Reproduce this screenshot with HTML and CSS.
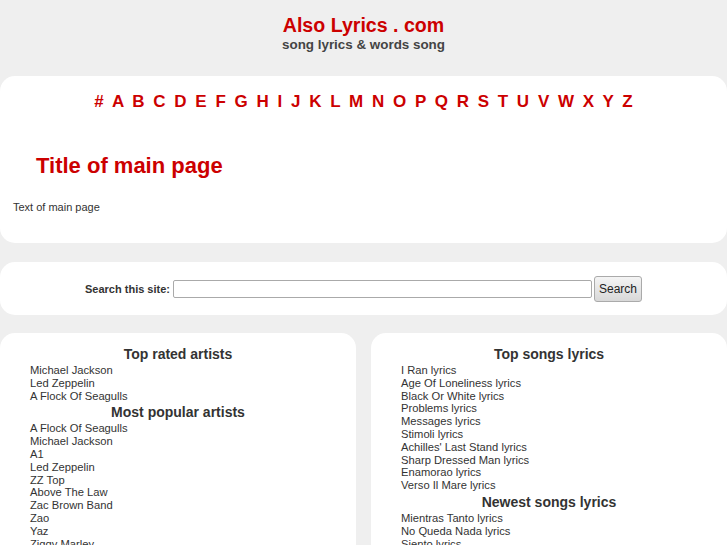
FILE: index.html
```html
<!DOCTYPE html>
<html>
<head>
<meta charset="utf-8">
<link rel="stylesheet" href="styles.css">
</head>
<body>
<div class="header">
  <div class="site-title">Also Lyrics . com</div>
  <div class="site-sub">song lyrics &amp; words song</div>
</div>
<div class="box main-box">
  <div class="letters">
    <a>#</a> <a>A</a> <a>B</a> <a>C</a> <a>D</a> <a>E</a> <a>F</a> <a>G</a> <a>H</a> <a>I</a> <a>J</a> <a>K</a> <a>L</a> <a>M</a> <a>N</a> <a>O</a> <a>P</a> <a>Q</a> <a>R</a> <a>S</a> <a>T</a> <a>U</a> <a>V</a> <a>W</a> <a>X</a> <a>Y</a> <a>Z</a>
  </div>
  <h1 class="page-title">Title of main page</h1>
  <p class="page-text">Text of main page</p>
</div>
<div class="box search-box">
  <form class="search-form">
    <label class="search-label">Search this site:</label>
    <input class="search-input" type="text">
    <button class="search-btn" type="button">Search</button>
  </form>
</div>
<div class="columns">
  <div class="box col">
    <h3 class="col-head">Top rated artists</h3>
    <ul class="list">
      <li>Michael Jackson</li>
      <li>Led Zeppelin</li>
      <li>A Flock Of Seagulls</li>
    </ul>
    <h3 class="col-head">Most popular artists</h3>
    <ul class="list">
      <li>A Flock Of Seagulls</li>
      <li>Michael Jackson</li>
      <li>A1</li>
      <li>Led Zeppelin</li>
      <li>ZZ Top</li>
      <li>Above The Law</li>
      <li>Zac Brown Band</li>
      <li>Zao</li>
      <li>Yaz</li>
      <li>Ziggy Marley</li>
      <li>Zapp</li>
    </ul>
  </div>
  <div class="box col">
    <h3 class="col-head">Top songs lyrics</h3>
    <ul class="list">
      <li>I Ran lyrics</li>
      <li>Age Of Loneliness lyrics</li>
      <li>Black Or White lyrics</li>
      <li>Problems lyrics</li>
      <li>Messages lyrics</li>
      <li>Stimoli lyrics</li>
      <li>Achilles' Last Stand lyrics</li>
      <li>Sharp Dressed Man lyrics</li>
      <li>Enamorao lyrics</li>
      <li>Verso Il Mare lyrics</li>
    </ul>
    <h3 class="col-head">Newest songs lyrics</h3>
    <ul class="list">
      <li>Mientras Tanto lyrics</li>
      <li>No Queda Nada lyrics</li>
      <li>Siento lyrics</li>
      <li>Algo lyrics</li>
    </ul>
  </div>
</div>
</body>
</html>
```
FILE: styles.css
```css
html, body {
  margin: 0;
  padding: 0;
  background: #efefef;
  font-family: "Liberation Sans", Arial, sans-serif;
  color: #333;
}
.header {
  text-align: center;
  padding-top: 13px;
  height: 76px;
  box-sizing: border-box;
}
.site-title {
  color: #cc0000;
  font-weight: bold;
  font-size: 19.6px;
  line-height: 24px;
}
.site-sub {
  font-weight: bold;
  font-size: 13.4px;
  line-height: 16px;
  color: #444;
}
.box {
  background: #fff;
  border-radius: 15px;
}
.main-box {
  height: 167px;
  box-sizing: border-box;
  padding-top: 14px;
}
.letters {
  text-align: center;
  font-weight: bold;
  font-size: 17px;
  line-height: 24px;
  word-spacing: 4px;
  color: #cc0000;
}
.letters a {
  color: #cc0000;
}
.page-title {
  margin: 0;
  padding: 39px 0 0 36px;
  font-size: 22px;
  line-height: 26px;
  color: #cc0000;
}
.page-text {
  margin: 0;
  padding: 21px 0 0 13px;
  font-size: 11px;
  line-height: 14px;
}
.search-box {
  margin-top: 19px;
  height: 53px;
  box-sizing: border-box;
}
.search-form {
  margin: 0;
  display: flex;
  justify-content: center;
  align-items: center;
  height: 53px;
  gap: 2px;
}
.search-label {
  font-weight: bold;
  font-size: 11px;
  margin-right: 1px;
}
.search-input {
  width: 419px;
  height: 18px;
  box-sizing: border-box;
  border: 1px solid #aaa;
  border-radius: 2px;
  margin: 0;
  padding: 0 2px;
}
.search-btn {
  width: 48px;
  height: 26px;
  margin: 0;
  padding: 0;
  border: 1px solid #aaa;
  border-radius: 3px;
  background: linear-gradient(#f4f4f4, #d8d8d8);
  font-family: "Liberation Sans", Arial, sans-serif;
  font-size: 12px;
  color: #222;
}
.columns {
  margin-top: 18px;
  display: grid;
  grid-template-columns: 356px 356px;
  column-gap: 15px;
}
.col {
  padding: 11px 0 0 30px;
  height: 240px;
  border-bottom-left-radius: 0;
  border-bottom-right-radius: 0;
}
.col-head {
  margin: 0 0 0 -30px;
  text-align: center;
  font-size: 14px;
  line-height: 20px;
  color: #333;
}
.list {
  list-style: none;
  margin: 0;
  padding: 0;
  font-size: 11.2px;
  line-height: 12.8px;
  color: #333;
}
```
